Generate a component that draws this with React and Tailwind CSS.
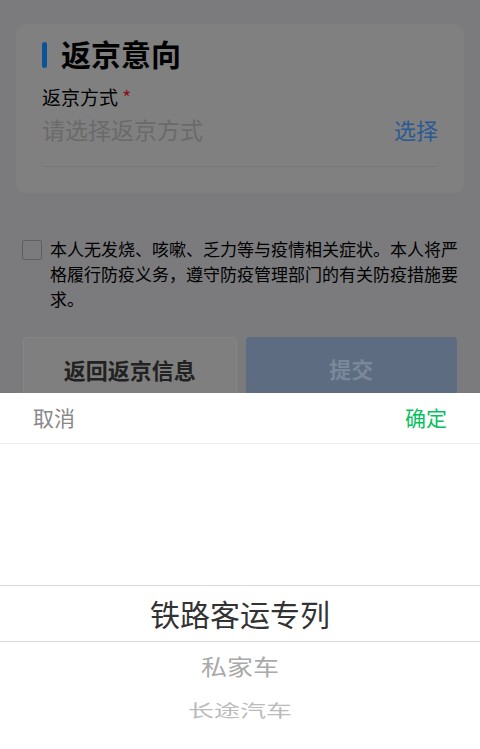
export default function App() {
  const font = { fontFamily: '"Noto Sans CJK SC", "Noto Sans", sans-serif' };
  return (
    <div style={font} className="w-[480px] h-[749px] bg-[#7b7b7d] flex flex-col overflow-hidden">
      <div className="h-[393px] shrink-0 px-4 pt-6 flex flex-col overflow-hidden">
        <div className="bg-[#808080] rounded-[10px] h-[169px] shrink-0 px-[26px] pt-[9px]">
          <div className="flex items-center gap-[14px] h-[40px]">
            <div className="w-[5px] h-[26px] rounded-full bg-[#0b5596] mt-[4px]"></div>
            <div className="text-[30px] leading-[40px] font-bold text-black">返京意向</div>
          </div>
          <div className="mt-[12px] text-[19px] leading-[24px] text-black">
            返京方式 <span className="text-[#8a1010]">*</span>
          </div>
          <div className="flex justify-between items-center mt-[4px] pb-[21px] border-b border-[#777]">
            <span className="text-[23px] leading-[32px] text-[#6a6a6a]">请选择返京方式</span>
            <span className="text-[22px] leading-[32px] text-[#2a5a94]">选择</span>
          </div>
        </div>
        <div className="flex shrink-0 mt-[43px] pl-[6px] pr-[4px] gap-[8px]">
          <div className="w-[20px] h-[20px] border border-[#5f5f5f] rounded-[2px] shrink-0 mt-[4px]"></div>
          <div className="text-[17px] leading-[25px] text-black">
            本人无发烧、咳嗽、乏力等与疫情相关症状。本人将严格履行防疫义务，遵守防疫管理部门的有关防疫措施要求。
          </div>
        </div>
        <div className="flex shrink-0 gap-[9px] mt-[26px] pl-[7px] pr-[7px]">
          <div className="flex-1 h-[70px] rounded-[4px] bg-[#7f7f7f] border border-[#858585] flex justify-center pt-[15px] text-[22px] leading-[32px] font-bold text-[#222]">
            返回返京信息
          </div>
          <div className="flex-1 h-[70px] rounded-[4px] bg-[#5d6c80] flex justify-center pt-[15px] text-[22px] leading-[32px] font-bold text-[#7a889a]">
            提交
          </div>
        </div>
      </div>
      <div className="flex-1 bg-white flex flex-col">
        <div className="h-[51px] shrink-0 flex items-center justify-between px-[33px] border-b border-[#eeeeee]">
          <span className="text-[21px] text-[#888]">取消</span>
          <span className="text-[21px] text-[#07c160]">确定</span>
        </div>
        <div className="h-[141px] shrink-0"></div>
        <div className="h-[57px] shrink-0 border-y border-[#d9d9d9] flex items-center justify-center text-[30px] text-[#333]">
          铁路客运专列
        </div>
        <div className="h-[47px] shrink-0 flex items-center justify-center text-[26px] text-[#aaaaaa] scale-y-[0.85]">私家车</div>
        <div className="h-[40px] shrink-0 flex items-center justify-center text-[26px] text-[#bbbbbb] scale-y-[0.65]">长途汽车</div>
      </div>
    </div>
  );
}
